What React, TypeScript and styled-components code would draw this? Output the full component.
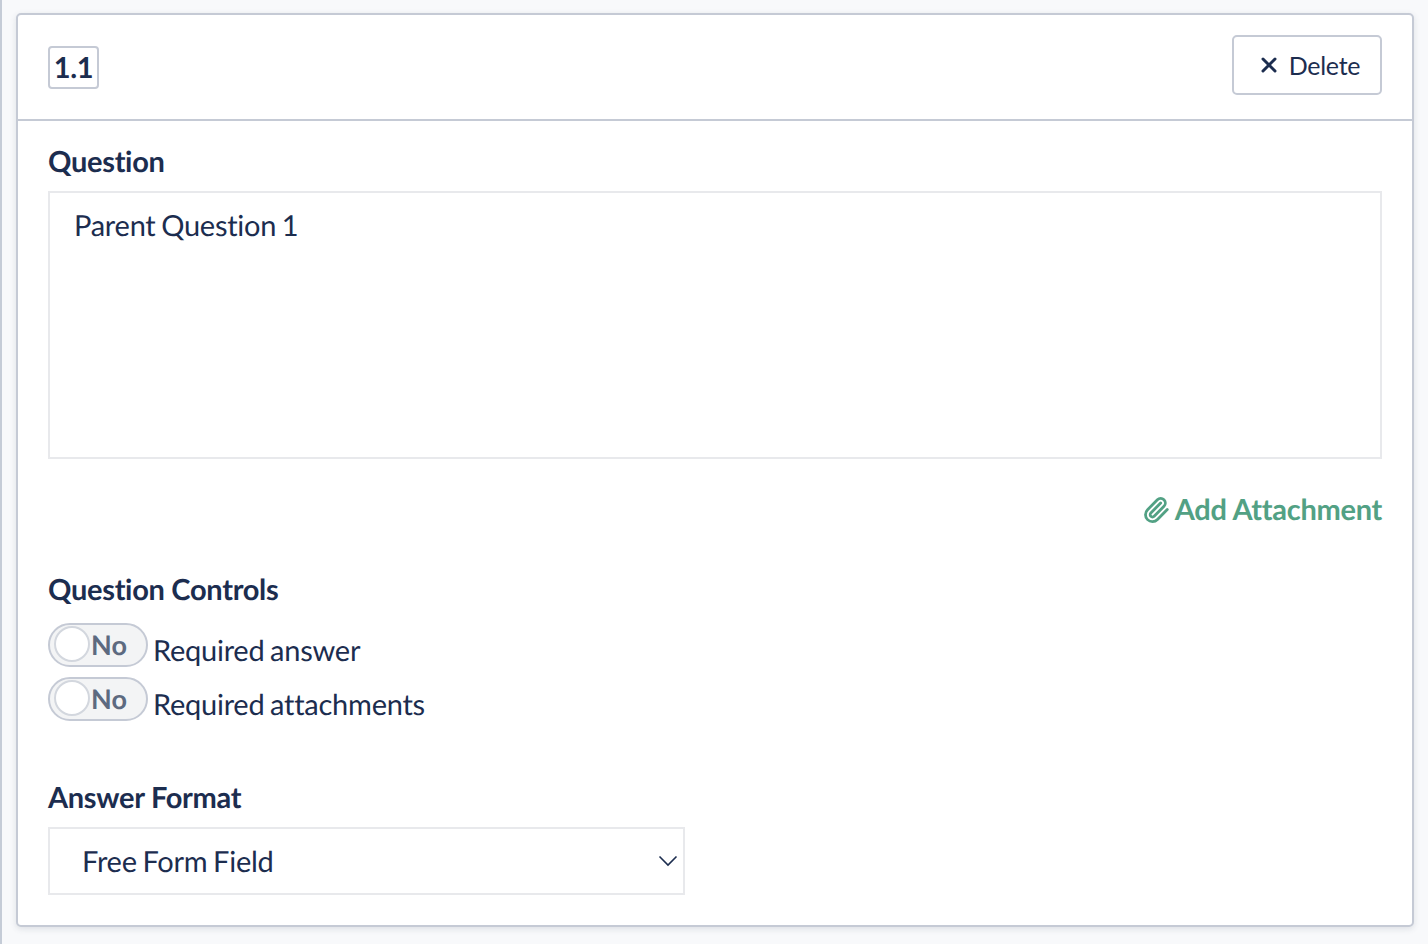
import React from 'react'
import styled, { createGlobalStyle } from 'styled-components'
import { X, Paperclip } from 'lucide-react'

const Global = createGlobalStyle`
  html, body { margin: 0; padding: 0; background: #f8f9fb; }
  body {
    font-family: Lato, "Liberation Sans", sans-serif;
    color: #1c2d4f;
    text-rendering: geometricPrecision;
    font-variant-ligatures: none;
  }
  * { box-sizing: border-box; }
`

const Page = styled.div`
  width: 1428px;
  height: 944px;
  overflow: hidden;
  padding: 13px 14px 0 14px;
  border-left: 2px solid #c5ccd7;
`

const Card = styled.div`
  height: 914px;
  background: #fff;
  border: 2px solid #c5cad5;
  border-radius: 5px;
  box-shadow: 0 2px 6px rgba(60, 70, 90, 0.14);
`

const Header = styled.div`
  height: 106px;
  padding: 20px 30px 0 30px;
  border-bottom: 2px solid #c5cad5;
  display: flex;
  justify-content: space-between;
  align-items: flex-start;
`

const Badge = styled.div`
  margin-top: 11px;
  width: 51px;
  height: 43px;
  border: 2px solid #c5cad5;
  border-radius: 4px;
  font-size: 29px;
  font-weight: 700;
  letter-spacing: -0.3px;
  display: flex;
  align-items: center;
  justify-content: center;
`

const DeleteButton = styled.button`
  width: 150px;
  height: 60px;
  background: #fff;
  border: 2px solid #c5cad5;
  border-radius: 5px;
  font-family: inherit;
  font-size: 25px;
  letter-spacing: -0.25px;
  color: inherit;
  display: flex;
  align-items: center;
  justify-content: center;
  gap: 8px;
  padding: 0 0 1px 3px;
`

const Body = styled.div`
  padding: 23px 30px 0 30px;
`

const Label = styled.div`
  font-size: 29px;
  font-weight: 700;
  line-height: 36px;
  letter-spacing: -0.3px;
`

const QuestionBox = styled.div`
  margin-top: 11px;
  height: 268px;
  border: 2px solid #e8e9ec;
  padding: 15px 24px;
  font-size: 29px;
  line-height: 36px;
  letter-spacing: -0.25px;
  word-spacing: -1.5px;
`

const AttachRow = styled.div`
  margin-top: 33px;
  display: flex;
  justify-content: flex-end;
  align-items: center;
  gap: 5px;
  font-size: 29px;
  font-weight: 700;
  line-height: 36px;
  letter-spacing: -0.3px;
  color: #52a184;
`

const ControlsLabel = styled(Label)`
  margin-top: 44px;
`

const ToggleList = styled.div`
  margin-top: 15px;
  display: flex;
  flex-direction: column;
  gap: 10px;
`

const ToggleRow = styled.div`
  display: flex;
  align-items: flex-start;
  gap: 5px;
  height: 44px;
`

const Toggle = styled.div`
  position: relative;
  width: 100px;
  height: 44px;
  border: 2px solid #c5cad5;
  border-radius: 22px;
  background: #f3f4f5;
  font-size: 27px;
  font-weight: 700;
  color: #5d6a80;
  padding-left: 41px;
  line-height: 40px;
`

const Knob = styled.span`
  position: absolute;
  left: 4px;
  top: 1px;
  width: 36px;
  height: 36px;
  border-radius: 50%;
  background: #fff;
  border: 2px solid #d3d7de;
`

const ToggleText = styled.span`
  font-size: 29px;
  line-height: 36px;
  margin-top: 10px;
  letter-spacing: -0.25px;
  word-spacing: -1.5px;
`

const FormatLabel = styled(Label)`
  margin-top: 59px;
`

const SelectBox = styled.div`
  margin-top: 11px;
  width: 637px;
  height: 68px;
  border: 2px solid #e8e9ec;
  padding: 0 5px 0 32px;
  display: flex;
  align-items: center;
  justify-content: space-between;
  font-size: 29px;
  letter-spacing: -0.25px;
  word-spacing: -1.5px;
`

const App: React.FC = () => (
  <>
    <Global />
    <Page>
      <Card>
        <Header>
          <Badge>1.1</Badge>
          <DeleteButton>
            <X size={24} strokeWidth={3} />
            Delete
          </DeleteButton>
        </Header>
        <Body>
          <Label>Question</Label>
          <QuestionBox>Parent Question 1</QuestionBox>
          <AttachRow>
            <Paperclip size={28} strokeWidth={2.4} />
            Add Attachment
          </AttachRow>
          <ControlsLabel>Question Controls</ControlsLabel>
          <ToggleList>
            {['Required answer', 'Required attachments'].map(text => (
              <ToggleRow key={text}>
                <Toggle>
                  <Knob />
                  No
                </Toggle>
                <ToggleText>{text}</ToggleText>
              </ToggleRow>
            ))}
          </ToggleList>
          <FormatLabel>Answer Format</FormatLabel>
          <SelectBox>
            Free Form Field
            <svg width="20" height="12" viewBox="0 0 20 12" fill="none" stroke="#1c2d4f" strokeWidth="1.6">
              <polyline points="1.5,1.5 10,10 18.5,1.5" />
            </svg>
          </SelectBox>
        </Body>
      </Card>
    </Page>
  </>
)

export default App
